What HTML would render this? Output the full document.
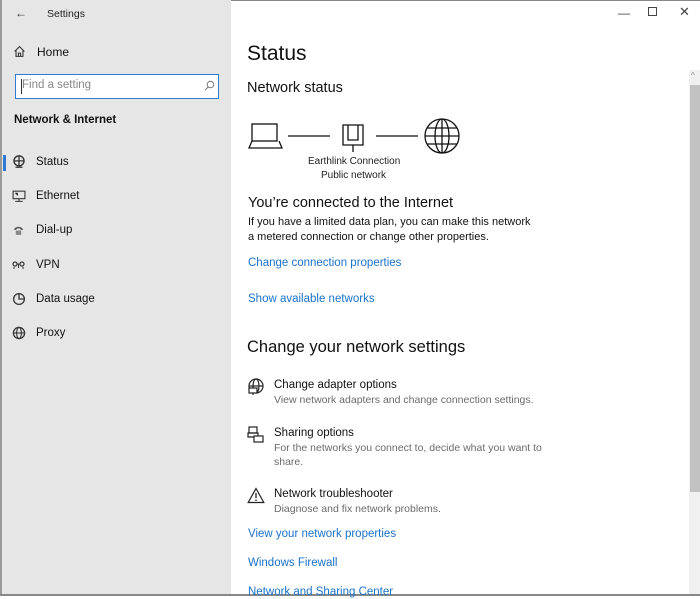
<!DOCTYPE html>
<html><head><style>
*{margin:0;padding:0;box-sizing:border-box}
body{width:700px;height:596px;overflow:hidden;background:#fff;font-family:"Liberation Sans",sans-serif;color:#000;position:relative}
.a{position:absolute;white-space:nowrap;line-height:1}
#side{position:absolute;left:0;top:0;width:231px;height:596px;background:#e6e6e6;border-left:2px solid #9a9a9a}
.nav{font-size:11.5px;color:#111}
.lk{color:#1a72c9;font-size:11.5px}
.g{color:#6b6b6b;font-size:10.5px}
svg{position:absolute}
</style></head><body>
<div style="position:absolute;left:0;top:0;width:700px;height:1px;background:#888"></div>
<div id="side"></div>
<div class="a" style="left:15px;top:7px;font-size:12px;color:#333">←</div>
<div class="a" style="left:47px;top:9px;font-size:10.5px;color:#222">Settings</div>
<svg style="left:13px;top:45px" width="13" height="13" viewBox="0 0 12 12"><path d="M1.5 6 L6 1.5 L10.5 6 M2.8 5 V10.5 H9.2 V5 M5 10.5 V7.5 H7 V10.5" fill="none" stroke="#333" stroke-width="1"/></svg>
<div class="a nav" style="left:37px;top:46px;font-size:12px">Home</div>
<div style="position:absolute;left:15px;top:74px;width:204px;height:25px;background:#fff;border:1.5px solid #2f7bd0"></div>
<div class="a" style="left:22px;top:80px;font-size:11.5px;color:#888">Find a setting</div>
<div style="position:absolute;left:21px;top:79px;width:1px;height:15px;background:#333"></div>
<svg style="left:204px;top:80px" width="11" height="11" viewBox="0 0 11 11"><circle cx="6.5" cy="4.5" r="3.3" fill="none" stroke="#777"/><path d="M4.2 7 L1 10.2" stroke="#777"/></svg>
<div class="a" style="left:14px;top:115px;font-size:11.5px;font-weight:bold;color:#111">Network &amp; Internet</div>
<div style="position:absolute;left:3px;top:155px;width:3px;height:16px;background:#2f7bd0"></div>
<svg style="left:12px;top:155px" width="14" height="14" viewBox="0 0 12 12"><circle cx="6" cy="5" r="4.3" fill="none" stroke="#333" stroke-width="1.2"/><path d="M1.7 5H10.3M6 .7V9.3M3 10.5H9" stroke="#333" stroke-width="1.1"/></svg>
<div class="a nav" style="left:36px;top:157px">Status</div>
<svg style="left:12px;top:190px" width="14" height="12" viewBox="0 0 13 11"><rect x="1" y="1" width="11" height="7" fill="none" stroke="#333"/><path d="M6.5 8V10.5M3 10.5H10M3 3H5V5" stroke="#333"/></svg>
<div class="a nav" style="left:36px;top:191px">Ethernet</div>
<svg style="left:12px;top:224px" width="13" height="12" viewBox="0 0 12 11"><path d="M1.5 5 Q6 0 10.5 5 L8.5 5.5 L7 4 L5 4 L3.5 5.5Z" fill="#555"/><rect x="3.5" y="6" width="5" height="4" fill="#888"/></svg>
<div class="a nav" style="left:36px;top:225px">Dial-up</div>
<svg style="left:12px;top:260px" width="13" height="10" viewBox="0 0 13 10"><circle cx="3" cy="4" r="2" fill="none" stroke="#333" stroke-width="1.2"/><circle cx="10" cy="4" r="2" fill="none" stroke="#333" stroke-width="1.2"/><path d="M5 4H8M6.5 4V8M2 7V9M11 7V9" stroke="#333"/></svg>
<div class="a nav" style="left:36px;top:260px">VPN</div>
<svg style="left:12px;top:292px" width="14" height="14" viewBox="0 0 13 13"><circle cx="6.5" cy="6.5" r="5" fill="none" stroke="#333" stroke-width="1.2"/><path d="M6.5 1.5V6.5H11.5" fill="none" stroke="#333" stroke-width="1.2"/></svg>
<div class="a nav" style="left:36px;top:294px">Data usage</div>
<svg style="left:12px;top:326px" width="14" height="14" viewBox="0 0 13 13"><circle cx="6.5" cy="6.5" r="5.2" fill="none" stroke="#333" stroke-width="1.2"/><ellipse cx="6.5" cy="6.5" rx="2.2" ry="5.2" fill="none" stroke="#333"/><path d="M1.3 6.5H11.7" stroke="#333"/></svg>
<div class="a nav" style="left:36px;top:328px">Proxy</div>

<div class="a" style="left:618px;top:7px;font-size:12px;color:#444">—</div>
<div style="position:absolute;left:648px;top:7px;width:9px;height:9px;border:1px solid #444"></div>
<div class="a" style="left:679px;top:5px;font-size:13px;color:#444">✕</div>
<div style="position:absolute;left:689px;top:70px;width:11px;height:526px;background:#f0f0f0"></div>
<div class="a" style="left:691px;top:72px;font-size:8px;color:#888">^</div>
<div style="position:absolute;left:690px;top:85px;width:10px;height:407px;background:#c2c2c2"></div>
<div style="position:absolute;left:0;top:594px;width:700px;height:2px;background:#888"></div>

<div class="a" style="left:247px;top:43px;font-size:21px;color:#111">Status</div>
<div class="a" style="left:247px;top:81px;font-size:14.5px;color:#111">Network status</div>
<svg style="left:245px;top:118px" width="220" height="40" viewBox="0 0 220 40">
<g fill="none" stroke="#111" stroke-width="1.3">
<rect x="7" y="6" width="25" height="17"/><path d="M7 23 L4 30 H37 L34 23"/>
<path d="M43 18H85M131 18H173"/>
<path d="M98 7H118V27H98Z M103 7V22H113V7 M108 27V34"/>
<circle cx="197" cy="18" r="17"/><ellipse cx="197" cy="18" rx="7" ry="17"/><path d="M180 18H214M182 10H212M182 26H212M197 1V35"/>
</g></svg>
<div class="a" style="left:308px;top:157px;font-size:10px;color:#222">Earthlink Connection</div>
<div class="a" style="left:321px;top:171px;font-size:10px;color:#222">Public network</div>
<div class="a" style="left:248px;top:196px;font-size:14.5px;color:#111">You’re connected to the Internet</div>
<div class="a" style="left:248px;top:217px;font-size:11px;color:#111">If you have a limited data plan, you can make this network</div>
<div class="a" style="left:248px;top:232px;font-size:11px;color:#111">a metered connection or change other properties.</div>
<div class="a lk" style="left:248px;top:258px">Change connection properties</div>
<div class="a lk" style="left:248px;top:294px">Show available networks</div>
<div class="a" style="left:247px;top:339px;font-size:16.5px;color:#111">Change your network settings</div>

<svg style="left:247px;top:378px" width="18" height="18" viewBox="0 0 18 18"><g fill="none" stroke="#222" stroke-width="1.2"><circle cx="9" cy="8" r="7"/><ellipse cx="9" cy="8" rx="3" ry="7"/><path d="M2 8H16"/><rect x="2" y="10" width="8" height="5" fill="#fff"/><path d="M6 15V17"/></g></svg>
<div class="a" style="left:274px;top:380px;font-size:11.5px;color:#111">Change adapter options</div>
<div class="a g" style="left:274px;top:395px">View network adapters and change connection settings.</div>
<svg style="left:247px;top:426px" width="18" height="18" viewBox="0 0 18 18"><g fill="none" stroke="#222" stroke-width="1.2"><rect x="2" y="1" width="8" height="6"/><path d="M1 7H11V11H1Z"/><rect x="7" y="10" width="9" height="6" fill="#fff"/></g></svg>
<div class="a" style="left:274px;top:428px;font-size:11.5px;color:#111">Sharing options</div>
<div class="a g" style="left:274px;top:443px">For the networks you connect to, decide what you want to</div>
<div class="a g" style="left:274px;top:457px">share.</div>
<svg style="left:247px;top:487px" width="18" height="17" viewBox="0 0 18 17"><path d="M9 1.5 L16.8 15.5 H1.2Z" fill="none" stroke="#222" stroke-width="1.2"/><path d="M9 6V11M9 12.5V14" stroke="#222" stroke-width="1.3"/></svg>
<div class="a" style="left:274px;top:489px;font-size:11.5px;color:#111">Network troubleshooter</div>
<div class="a g" style="left:274px;top:504px">Diagnose and fix network problems.</div>
<div class="a lk" style="left:248px;top:529px">View your network properties</div>
<div class="a lk" style="left:248px;top:558px">Windows Firewall</div>
<div class="a lk" style="left:248px;top:587px">Network and Sharing Center</div>
</body></html>
